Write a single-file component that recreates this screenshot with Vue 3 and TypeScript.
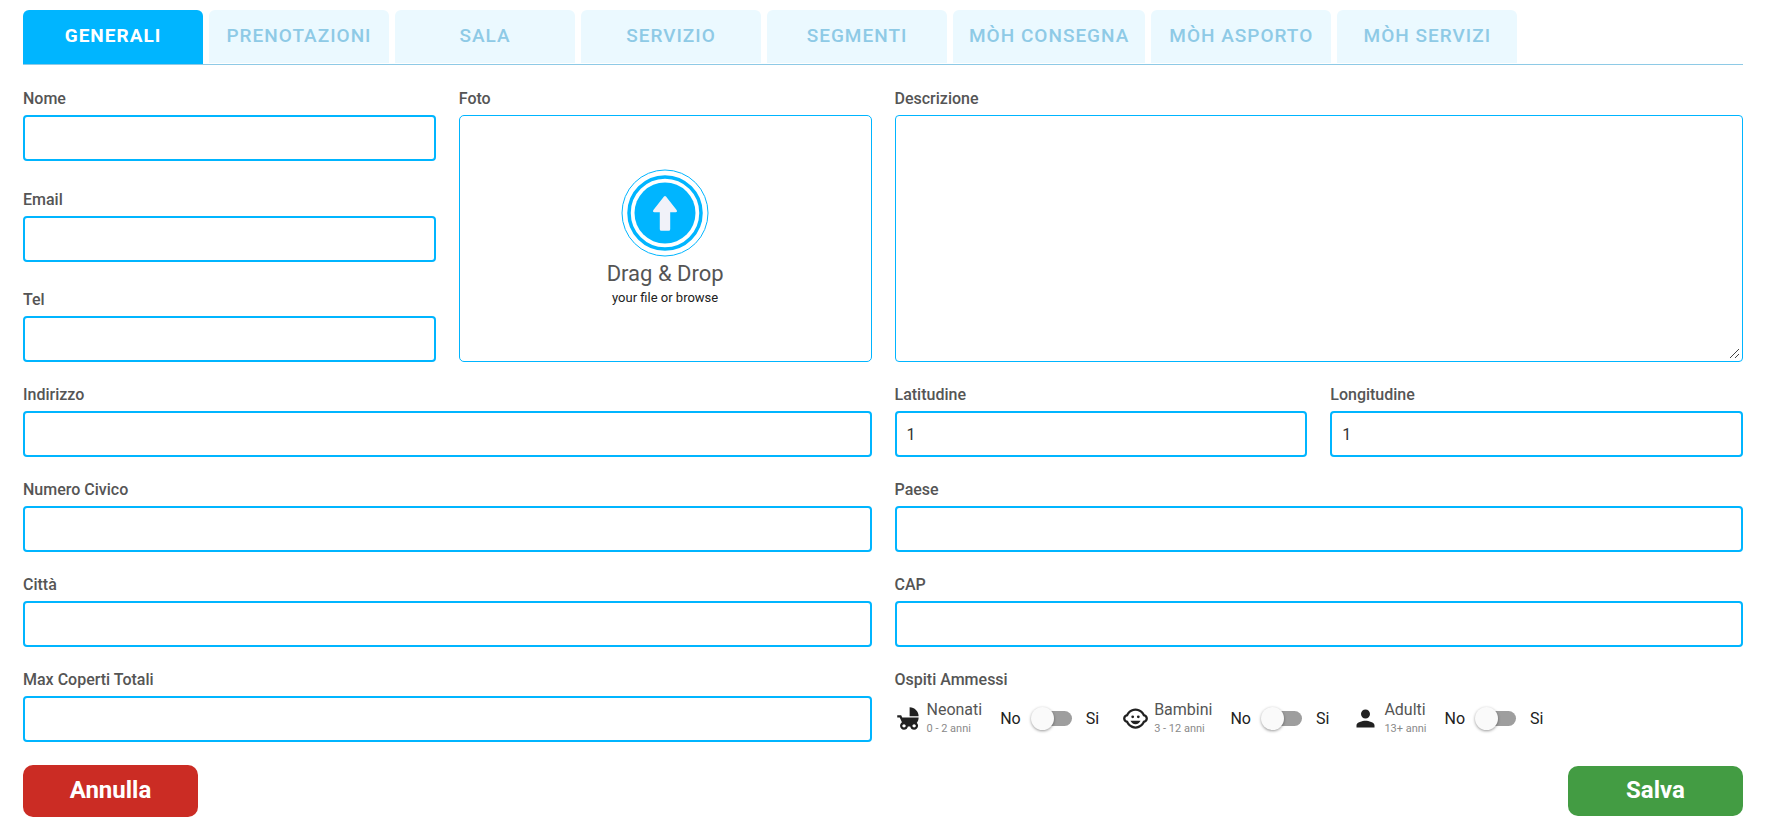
<script setup lang="ts">
import { reactive, ref } from 'vue'

interface Guest {
  id: string
  name: string
  age: string
  icon: string
  allowed: boolean
}

const tabs: string[] = [
  'Generali',
  'Prenotazioni',
  'Sala',
  'Servizio',
  'Segmenti',
  'Mòh Consegna',
  'Mòh Asporto',
  'Mòh Servizi',
]
const activeTab = ref('Generali')

const form = reactive({
  nome: '',
  email: '',
  tel: '',
  descrizione: '',
  indirizzo: '',
  latitudine: '1',
  longitudine: '1',
  numeroCivico: '',
  paese: '',
  citta: '',
  cap: '',
  maxCoperti: '',
})

const guests = reactive<Guest[]>([
  {
    id: 'neonati',
    name: 'Neonati',
    age: '0 - 2 anni',
    icon: 'M13 2v8h8c0-4.42-3.58-8-8-8zm6.32 13.89C20.37 14.54 21 12.84 21 11H6.44l-.95-2H2v2h2.22s1.89 4.07 2.12 4.42c-1.1.59-1.84 1.75-1.84 3.08C4.5 20.43 6.07 22 8 22c1.76 0 3.22-1.3 3.46-3h2.08c.24 1.7 1.7 3 3.46 3 1.93 0 3.5-1.57 3.5-3.5 0-1.04-.46-1.97-1.18-2.61zM8 20c-.83 0-1.5-.67-1.5-1.5S7.17 17 8 17s1.5.67 1.5 1.5S8.83 20 8 20zm9 0c-.83 0-1.5-.67-1.5-1.5S16.17 17 17 17s1.5.67 1.5 1.5S17.83 20 17 20z',
    allowed: false,
  },
  {
    id: 'bambini',
    name: 'Bambini',
    age: '3 - 12 anni',
    icon: 'M13.25 10.5a1.25 1.25 0 1 0 2.5 0a1.25 1.25 0 1 0-2.5 0zM8.25 10.5a1.25 1.25 0 1 0 2.5 0a1.25 1.25 0 1 0-2.5 0zM22.94 12.66c.04-.21.06-.43.06-.66s-.02-.45-.06-.66c-.25-1.51-1.36-2.74-2.81-3.17-.53-1.12-1.28-2.1-2.19-2.91C16.36 3.85 14.28 3 12 3s-4.36.85-5.94 2.26c-.92.81-1.67 1.8-2.19 2.91-1.45.43-2.56 1.65-2.81 3.17-.04.21-.06.43-.06.66s.02.45.06.66c.25 1.51 1.36 2.74 2.81 3.17.52 1.11 1.27 2.09 2.17 2.89C7.62 20.14 9.71 21 12 21s4.38-.86 5.97-2.28c.9-.8 1.65-1.79 2.17-2.89 1.44-.43 2.55-1.65 2.8-3.17zM19 14c-.1 0-.19-.02-.29-.03-.2.67-.49 1.29-.86 1.86C16.6 17.74 14.45 19 12 19s-4.6-1.26-5.85-3.17c-.37-.57-.66-1.19-.86-1.86-.1.01-.19.03-.29.03-1.1 0-2-.9-2-2s.9-2 2-2c.1 0 .19.02.29.03.2-.67.49-1.29.86-1.86C7.4 6.26 9.55 5 12 5s4.6 1.26 5.85 3.17c.37.57.66 1.19.86 1.86.1-.01.19-.03.29-.03 1.1 0 2 .9 2 2s-.9 2-2 2zM7.5 14c.76 1.77 2.49 3 4.5 3s3.74-1.23 4.5-3h-9z',
    allowed: false,
  },
  {
    id: 'adulti',
    name: 'Adulti',
    age: '13+ anni',
    icon: 'M12 12c2.21 0 4-1.79 4-4s-1.79-4-4-4-4 1.79-4 4 1.79 4 4 4zm0 2c-2.67 0-8 1.34-8 4v2h16v-2c0-2.66-5.33-4-8-4z',
    allowed: false,
  },
])
</script>

<template>
  <form class="page" @submit.prevent>
    <nav class="tabs">
      <button
        v-for="tab in tabs"
        :key="tab"
        type="button"
        class="tab"
        :class="{ active: tab === activeTab }"
        @click="activeTab = tab"
      >
        {{ tab }}
      </button>
    </nav>

    <div class="fields">
      <div class="contacts">
        <div class="field">
          <label for="nome">Nome</label>
          <input id="nome" v-model="form.nome" type="text" />
        </div>
        <div class="field">
          <label for="email">Email</label>
          <input id="email" v-model="form.email" type="email" />
        </div>
        <div class="field">
          <label for="tel">Tel</label>
          <input id="tel" v-model="form.tel" type="tel" />
        </div>
      </div>

      <div class="field">
        <label for="foto">Foto</label>
        <label class="dropzone" for="foto">
          <svg class="upload" viewBox="0 0 88 88" aria-hidden="true">
            <circle cx="44" cy="44" r="43" fill="#fff" stroke="#00b5ff" stroke-width="1" />
            <circle cx="44" cy="44" r="36" fill="#fff" stroke="#00b5ff" stroke-width="3.5" />
            <circle cx="44" cy="44" r="30.5" fill="#00b5ff" />
            <path
              d="M43 27.4q1-1 2 0l10.600 13.600q1.200 2-1 2.200h-5.400v17q0 1.500-1.500 1.500h-7.400q-1.500 0-1.500-1.500v-17h-5.400q-2.200-.2-1-2.200z"
              fill="#f1f2f9"
            />
          </svg>
          <span class="drop-title">Drag &amp; Drop</span>
          <span class="drop-hint">your file or browse</span>
        </label>
        <input id="foto" class="hidden-input" type="file" accept="image/*" />
      </div>

      <div class="field wide">
        <label for="descrizione">Descrizione</label>
        <textarea id="descrizione" v-model="form.descrizione"></textarea>
      </div>

      <div class="field wide">
        <label for="indirizzo">Indirizzo</label>
        <input id="indirizzo" v-model="form.indirizzo" type="text" />
      </div>
      <div class="field">
        <label for="latitudine">Latitudine</label>
        <input id="latitudine" v-model="form.latitudine" type="text" />
      </div>
      <div class="field">
        <label for="longitudine">Longitudine</label>
        <input id="longitudine" v-model="form.longitudine" type="text" />
      </div>

      <div class="field wide">
        <label for="civico">Numero Civico</label>
        <input id="civico" v-model="form.numeroCivico" type="text" />
      </div>
      <div class="field wide">
        <label for="paese">Paese</label>
        <input id="paese" v-model="form.paese" type="text" />
      </div>

      <div class="field wide">
        <label for="citta">Città</label>
        <input id="citta" v-model="form.citta" type="text" />
      </div>
      <div class="field wide">
        <label for="cap">CAP</label>
        <input id="cap" v-model="form.cap" type="text" />
      </div>

      <div class="field wide">
        <label for="coperti">Max Coperti Totali</label>
        <input id="coperti" v-model="form.maxCoperti" type="text" />
      </div>
      <div class="field wide" role="group" aria-labelledby="ospiti">
        <span id="ospiti" class="caption">Ospiti Ammessi</span>
        <div class="guests">
          <div v-for="guest in guests" :key="guest.id" class="guest">
            <svg class="guest-icon" viewBox="0 0 24 24" aria-hidden="true">
              <path :d="guest.icon" />
            </svg>
            <span :id="guest.id + '-label'" class="guest-text">
              <span class="guest-name">{{ guest.name }}</span>
              <span class="guest-age">{{ guest.age }}</span>
            </span>
            <label class="switch">
              <span>No</span>
              <input
                v-model="guest.allowed"
                type="checkbox"
                :aria-labelledby="guest.id + '-label'"
              />
              <span>Si</span>
            </label>
          </div>
        </div>
      </div>
    </div>

    <div class="actions">
      <button type="button" class="action cancel">Annulla</button>
      <button type="submit" class="action save">Salva</button>
    </div>
  </form>
</template>

<style>
body {
  margin: 0;
  background: #fff;
}
</style>

<style scoped>
.page {
  box-sizing: border-box;
  padding: 10px 24px 2px 23px;
  font-family: Roboto, 'Liberation Sans', sans-serif;
  font-size: 16px;
  color: #212121;
}

.page *,
.page *::before {
  box-sizing: border-box;
}

.tabs {
  display: flex;
  gap: 6px;
  height: 55px;
  border-bottom: 1px solid #8ecae6;
}

.tab {
  min-width: 180px;
  height: 53px;
  padding: 0 16px 2px;
  border: 0;
  border-radius: 6px 6px 0 0;
  background: #ebf9ff;
  color: #8ecae6;
  font-family: inherit;
  font-size: 19px;
  font-weight: 500;
  letter-spacing: 1px;
  text-transform: uppercase;
  white-space: nowrap;
  cursor: pointer;
}

.tab.active {
  height: 54px;
  padding-bottom: 3px;
  background: #00b5ff;
  color: #fff;
  font-weight: 700;
}

.fields {
  display: grid;
  grid-template-columns: repeat(4, minmax(0, 1fr));
  gap: 24px 23px;
  padding-top: 25px;
}

.wide {
  grid-column: span 2;
}

.contacts {
  display: flex;
  flex-direction: column;
  justify-content: space-between;
  min-height: 272px;
}

.field {
  display: flex;
  flex-direction: column;
}

.field > label:first-child,
.caption {
  height: 25px;
  line-height: 18px;
  font-weight: 500;
  color: #555;
}

.field > input:not(.hidden-input) {
  width: 100%;
  height: 46px;
  padding: 0 10px;
  border: 2px solid #00b5ff;
  border-radius: 4px;
  outline: 0;
  background: #fff;
  color: #333;
  font-family: inherit;
  font-size: 16px;
}

textarea {
  flex: 1;
  width: 100%;
  padding: 10px;
  border: 1px solid #00b5ff;
  border-radius: 4px;
  outline: 0;
  font-family: inherit;
  font-size: 16px;
}

textarea::-webkit-resizer {
  background: url("data:image/svg+xml,%3Csvg xmlns='http://www.w3.org/2000/svg' width='15' height='15'%3E%3Cpath d='M3 12L12 3M8 12L12 8' stroke='%23444' fill='none'/%3E%3C/svg%3E")
    right bottom no-repeat;
}

.dropzone {
  flex: 1;
  display: flex;
  flex-direction: column;
  align-items: center;
  justify-content: center;
  padding-bottom: 2px;
  border: 1px solid #00b5ff;
  border-radius: 5px;
  cursor: pointer;
}

.upload {
  width: 88px;
  height: 88px;
}

.drop-title {
  margin-top: 2px;
  font-size: 22px;
  line-height: 30px;
  color: #555;
}

.drop-hint {
  font-size: 13px;
  line-height: 18px;
  color: #212121;
}

.hidden-input {
  display: none;
}

.guests {
  display: flex;
  align-items: center;
  gap: 23px;
  height: 44px;
}

.guest {
  display: flex;
  align-items: center;
}

.guest-icon {
  width: 27px;
  height: 27px;
  margin-right: 5px;
  fill: #212121;
}

.guest-text {
  display: flex;
  flex-direction: column;
  margin-right: 18px;
}

.guest-name {
  line-height: 22px;
  color: #555;
}

.guest-age {
  font-size: 11px;
  line-height: 16px;
  color: #8a8a8a;
}

.switch {
  display: flex;
  align-items: center;
  color: #212121;
  cursor: pointer;
}

.switch input {
  position: relative;
  appearance: none;
  width: 36px;
  height: 15px;
  margin: 0 14px 0 15px;
  border-radius: 15px;
  background: #9e9e9e;
  cursor: pointer;
}

.switch input::before {
  content: '';
  position: absolute;
  top: -4px;
  left: -5px;
  width: 23px;
  height: 23px;
  border-radius: 50%;
  background: #fafafa;
  box-shadow: 0 1px 3px rgba(0, 0, 0, 0.4);
  transition: left 0.2s;
}

.switch input:checked {
  background: #84d8ff;
}

.switch input:checked::before {
  left: 18px;
  background: #00b5ff;
}

.actions {
  display: flex;
  align-items: center;
  justify-content: space-between;
  padding-top: 23px;
}

.action {
  width: 175px;
  height: 52px;
  padding: 0 0 2px;
  border: 0;
  border-radius: 10px;
  color: #fff;
  font-family: inherit;
  font-size: 24px;
  font-weight: 700;
  cursor: pointer;
}

.cancel {
  background: #cb2c24;
}

.save {
  height: 50px;
  background: #439c43;
}
</style>
